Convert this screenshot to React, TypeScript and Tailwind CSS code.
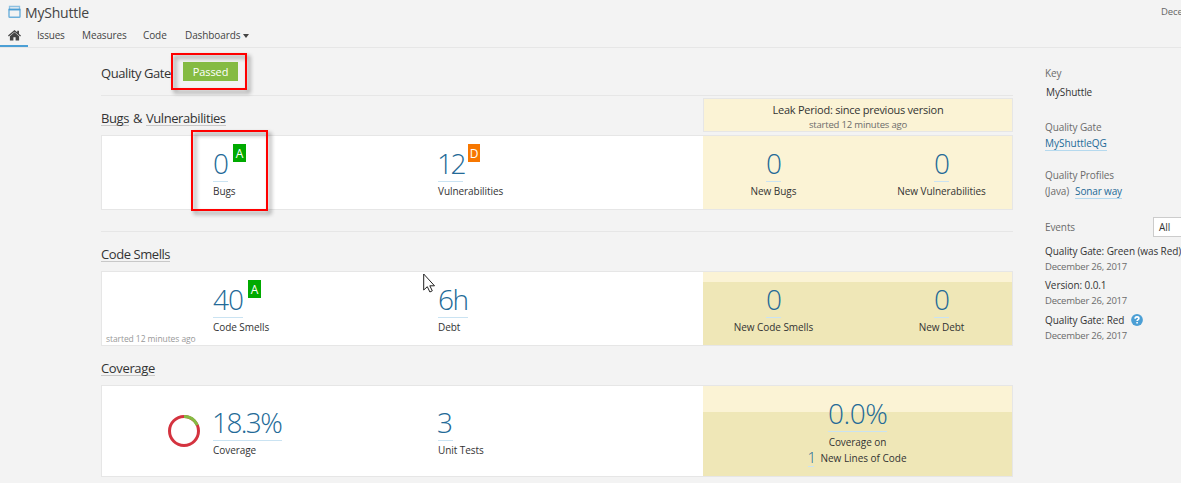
import type { ReactNode } from "react";

function Heading({ children }: { children: ReactNode }) {
  return <span className="inline-block h-[18px] border-b border-[#c8c8c8] leading-[20px]">{children}</span>;
}

function Rating({ value, color }: { value: string; color: string }) {
  return (
    <span className={`-mt-[6px] ml-[5px] h-[18px] text-center text-[12px] leading-[19px] text-white ${color}`}>{value}</span>
  );
}

type MeasureProps = { value: string; label: string; width: string; rating?: ReactNode; center?: boolean; labelGap?: string };

function Measure({ value, label, width, rating, center, labelGap = "mt-px" }: MeasureProps) {
  return (
    <div className={`flex flex-col ${center ? "items-center" : "items-start"}`}>
      <div className="flex">
        <span className={`h-8 border-b border-[#cae3f2] text-[28px] leading-[26px] font-light whitespace-nowrap text-[#236a97] ${width}`}>
          {value}
        </span>
        {rating}
      </div>
      <span className={`h-4 leading-4 tracking-[-0.06px] whitespace-nowrap text-[#333] ${labelGap}`}>{label}</span>
    </div>
  );
}

function Card({ height, pad, aside, left, right, leak, shade }: {
  height: string; pad: string; aside?: ReactNode; left: ReactNode; right: ReactNode; leak: ReactNode; shade?: string;
}) {
  return (
    <div className={`flex border border-[#e6e6e6] bg-white ${height}`}>
      <div className={`flex w-[601px] ${pad}`}>
        <div className="flex w-[111px]">{aside}</div>
        <div className="w-[225px]">{left}</div>
        <div>{right}</div>
      </div>
      <div className="flex flex-1 flex-col bg-[#fbf3d5]">
        <div className={`flex-1 pt-[14px] ${shade ?? ""}`}>{leak}</div>
      </div>
    </div>
  );
}

function Pair({ children }: { children: ReactNode }) {
  return <div className="grid grid-cols-[141px_141px] justify-between">{children}</div>;
}

function Event({ title, gap, help }: { title: string; gap: string; help?: boolean }) {
  return (
    <div className={gap}>
      <div className={`flex items-center leading-4 tracking-[-0.09px] whitespace-nowrap text-[#333] ${help ? "h-[17px]" : "h-4"}`}>
        {title}
        {help && (
          <svg className="ml-[7px]" width="12" height="12" viewBox="0 0 12 12">
            <circle cx="6" cy="6" r="5.9" fill="#4b9fd5" />
            <path d="M4.1 4.700C4.100 3.400 5 2.900 6 2.900s1.900.6 1.900 1.600C7.900 5.700 6.100 5.700 6.100 7.100M6.100 8v1.500" fill="none" stroke="#fff" strokeWidth="1.600" />
          </svg>
        )}
      </div>
      <div className="h-4 text-[9.5px] leading-4 tracking-[-0.23px] whitespace-nowrap text-[#6b6b6b]">December 26, 2017</div>
    </div>
  );
}

export default function App() {
  return (
    <div className="relative h-[483px] w-[1181px] overflow-hidden bg-[#f3f3f3] font-['Open_Sans',sans-serif] text-[10px] tracking-[-0.1px] text-[#333]">
      <header className="flex h-12 flex-col border-b border-[#e6e6e6]">
        <div className="flex h-[25px] justify-between">
          <div className="flex">
            <svg className="mt-[5px] ml-2" width="13" height="13" viewBox="0 0 13 13" fill="none" stroke="#4b9fd5">
              <path d="M1.500 4V1.500H11.500V4" strokeOpacity=".6" strokeWidth="1.300" />
              <rect x="1" y="4.500" width="11" height="7.800" rx=".8" strokeOpacity=".8" strokeWidth="1.400" />
              <path d="M.5 4.500H12.500" strokeWidth="1.600" />
            </svg>
            <span className="ml-1 text-[14px] leading-[26px] tracking-[-0.2px] text-[#444]">MyShuttle</span>
          </div>
          <span className="w-5 overflow-hidden text-[9.5px] leading-[23px] whitespace-nowrap text-[#666]">Dece</span>
        </div>
        <nav className="flex h-[22px] leading-[21px] text-[#444]">
          <div className="flex w-7 justify-center border-b-2 border-[#4b9fd5] pt-[5px]">
            <svg width="13" height="11" viewBox="0 0 13 11" fill="#444">
              <path d="M6.500 0 0 5.600l.8.9L6.500 1.700l5.700 4.800.8-.9-2-1.700V.8H9.200v1.500z" />
              <path d="M6.500 2.300 1.900 6.200V10.500H5.400V7.300H7.600V10.500H11.100V6.200z" />
            </svg>
          </div>
          <span className="ml-[9px] w-[45px] tracking-[-0.2px]">Issues</span>
          <span className="w-[61px]">Measures</span>
          <span className="w-[42px]">Code</span>
          <span>Dashboards</span>
          <svg className="mt-[9px] ml-[3px]" width="6" height="4" viewBox="0 0 6 4"><path d="M0 0h6L3 4z" fill="#444" /></svg>
        </nav>
      </header>

      <div className="flex">
        <main className="ml-[101px] w-[912px]">
          <div className="flex h-12 border-b border-[#e6e6e6]">
            <span className="mt-[15px] w-[82px] text-[13px] leading-[21px] tracking-[-0.42px] whitespace-nowrap">Quality Gate</span>
            <span className="mt-[14px] h-[19px] w-[55px] bg-[#85bb43] text-center text-[11px] leading-[20px] text-white">Passed</span>
          </div>

          <div className="flex h-[39px] justify-between">
            <h2 className="mt-3 text-[13px] tracking-[-0.42px] [word-spacing:1px]">
              <Heading>Bugs</Heading> &amp; <Heading>Vulnerabilities</Heading>
            </h2>
            <div className="mt-[2px] flex h-[34px] w-[310px] flex-col items-center border border-[#e6e6e6] bg-[#fbf3d5]">
              <span className="mt-[3px] h-4 text-[11px] leading-4 tracking-[-0.25px]">Leak Period: since previous version</span>
              <span className="h-3 text-[9.5px] leading-[13px] tracking-[-0.18px] text-[#6b6b6b]">started 12 minutes ago</span>
            </div>
          </div>
          <Card
            height="h-[75px]" pad="pt-[14px]"
            left={<Measure value="0" label="Bugs" width="w-[15px] tracking-[-1px]" rating={<Rating value="A" color="w-[13px] bg-[#0a0]" />} />}
            right={<Measure value="12" label="Vulnerabilities" width="w-[25px] tracking-[-2.5px] -indent-px" rating={<Rating value="D" color="w-[12px] bg-[#f77700]" />} />}
            leak={
              <Pair>
                <Measure center value="0" label="New Bugs" width="w-[15px] tracking-[-1px]" />
                <Measure center value="0" label="New Vulnerabilities" width="w-[15px] tracking-[-1px]" />
              </Pair>
            }
          />

          <div className="mt-[21px] h-10 border-t border-[#e6e6e6] pt-3">
            <h2 className="text-[13px] tracking-[-0.43px]"><Heading>Code Smells</Heading></h2>
          </div>
          <Card
            height="h-[75px]" pad="pt-[14px]" shade="mt-[10px] pt-[4px]! bg-[#efe7b7]"
            aside={<span className="mt-[46px] ml-1 text-[8.5px] leading-[14px] tracking-[-0.08px] whitespace-nowrap text-[#999]">started 12 minutes ago</span>}
            left={<Measure value="40" label="Code Smells" width="w-[30px] tracking-[-1px]" rating={<Rating value="A" color="w-[13px] bg-[#0a0]" />} />}
            right={<Measure value="6h" label="Debt" width="w-[30px] tracking-[-1.5px]" />}
            leak={
              <Pair>
                <Measure center value="0" label="New Code Smells" width="w-[15px] tracking-[-1px]" />
                <Measure center value="0" label="New Debt" width="w-[15px] tracking-[-1px]" />
              </Pair>
            }
          />

          <h2 className="h-[39px] pt-3 text-[13px] tracking-[-0.35px]"><Heading>Coverage</Heading></h2>
          <Card
            height="h-[92px]" pad="pt-[23px]" shade="mt-[26px] pt-0! bg-[#efe7b7]"
            aside={
              <svg className="mt-[6px] ml-[66px]" width="32" height="32" viewBox="0 0 32 32" fill="none" strokeWidth="3">
                <circle cx="16" cy="16" r="14.500" stroke="#d4333f" />
                <circle cx="16" cy="16" r="14.500" stroke="#85bb43" pathLength="100" strokeDasharray="18.300 81.700" transform="rotate(-90 16 16)" />
              </svg>
            }
            left={<Measure value="18.3%" label="Coverage" width="w-[69px] tracking-[-1.6px] -indent-px" />}
            right={<Measure value="3" label="Unit Tests" width="w-[15px] tracking-[-1px] -indent-px" />}
            leak={
              <div className="-mt-3 flex flex-col items-center">
                <Measure center value="0.0%" label="Coverage on" width="w-[59px] tracking-[-0.5px]" labelGap="mt-[2px]" />
                <div className="flex h-4 leading-4">
                  <span className="mr-[6px] h-[17px] w-[6px] border-b border-[#cae3f2] -indent-px text-[15px] leading-[14px] font-light text-[#236a97]">1</span>
                  <span className="tracking-[-0.02px]">New Lines of Code</span>
                </div>
              </div>
            }
          />
        </main>

        <aside className="ml-8 w-[136px] leading-4">
          <div className="mt-[17px] text-[#6b6b6b]">Key</div>
          <div className="mt-[3px] ml-px">MyShuttle</div>
          <div className="mt-[19px] text-[#6b6b6b]">Quality Gate</div>
          <div><a className="inline-block h-4 border-b border-[#b5d9ee] tracking-[-0.02px] text-[#236a97]">MyShuttleQG</a></div>
          <div className="mt-4 text-[#6b6b6b]">Quality Profiles</div>
          <div className="flex text-[#6b6b6b]">
            (Java)<a className="ml-[6px] h-4 border-b border-[#b5d9ee] tracking-[-0.15px] text-[#236a97]">Sonar way</a>
          </div>
          <div className="mt-[18px] flex h-5 w-[170px] items-center justify-between">
            <span className="text-[#6b6b6b]">Events</span>
            <span className="mr-[-8px] h-5 w-[70px] border border-[#ccc] bg-white pl-[5px] leading-[18px]">All</span>
          </div>
          <Event title="Quality Gate: Green (was Red)" gap="mt-[6px]" />
          <Event title="Version: 0.0.1" gap="mt-[2px]" />
          <Event title="Quality Gate: Red" gap="mt-[2px]" help />
        </aside>
      </div>

      <div className="absolute top-[53px] left-[171px] h-[37px] w-[76px] border-2 border-[#f00] drop-shadow-[3px_3px_2px_rgba(0,0,0,0.45)]" />
      <div className="absolute top-[130px] left-[191px] h-[81px] w-[77px] border-2 border-[#f00] drop-shadow-[3px_3px_2px_rgba(0,0,0,0.45)]" />
      <svg className="absolute top-[273px] left-[423px]" width="14" height="20" viewBox="0 0 14 20">
        <path d="M.7 1v16l3.600-3.300 2.600 5.300 2.400-1.200-2.500-5h4.700z" fill="#fff" stroke="#222" strokeWidth="1" />
      </svg>
    </div>
  );
}
